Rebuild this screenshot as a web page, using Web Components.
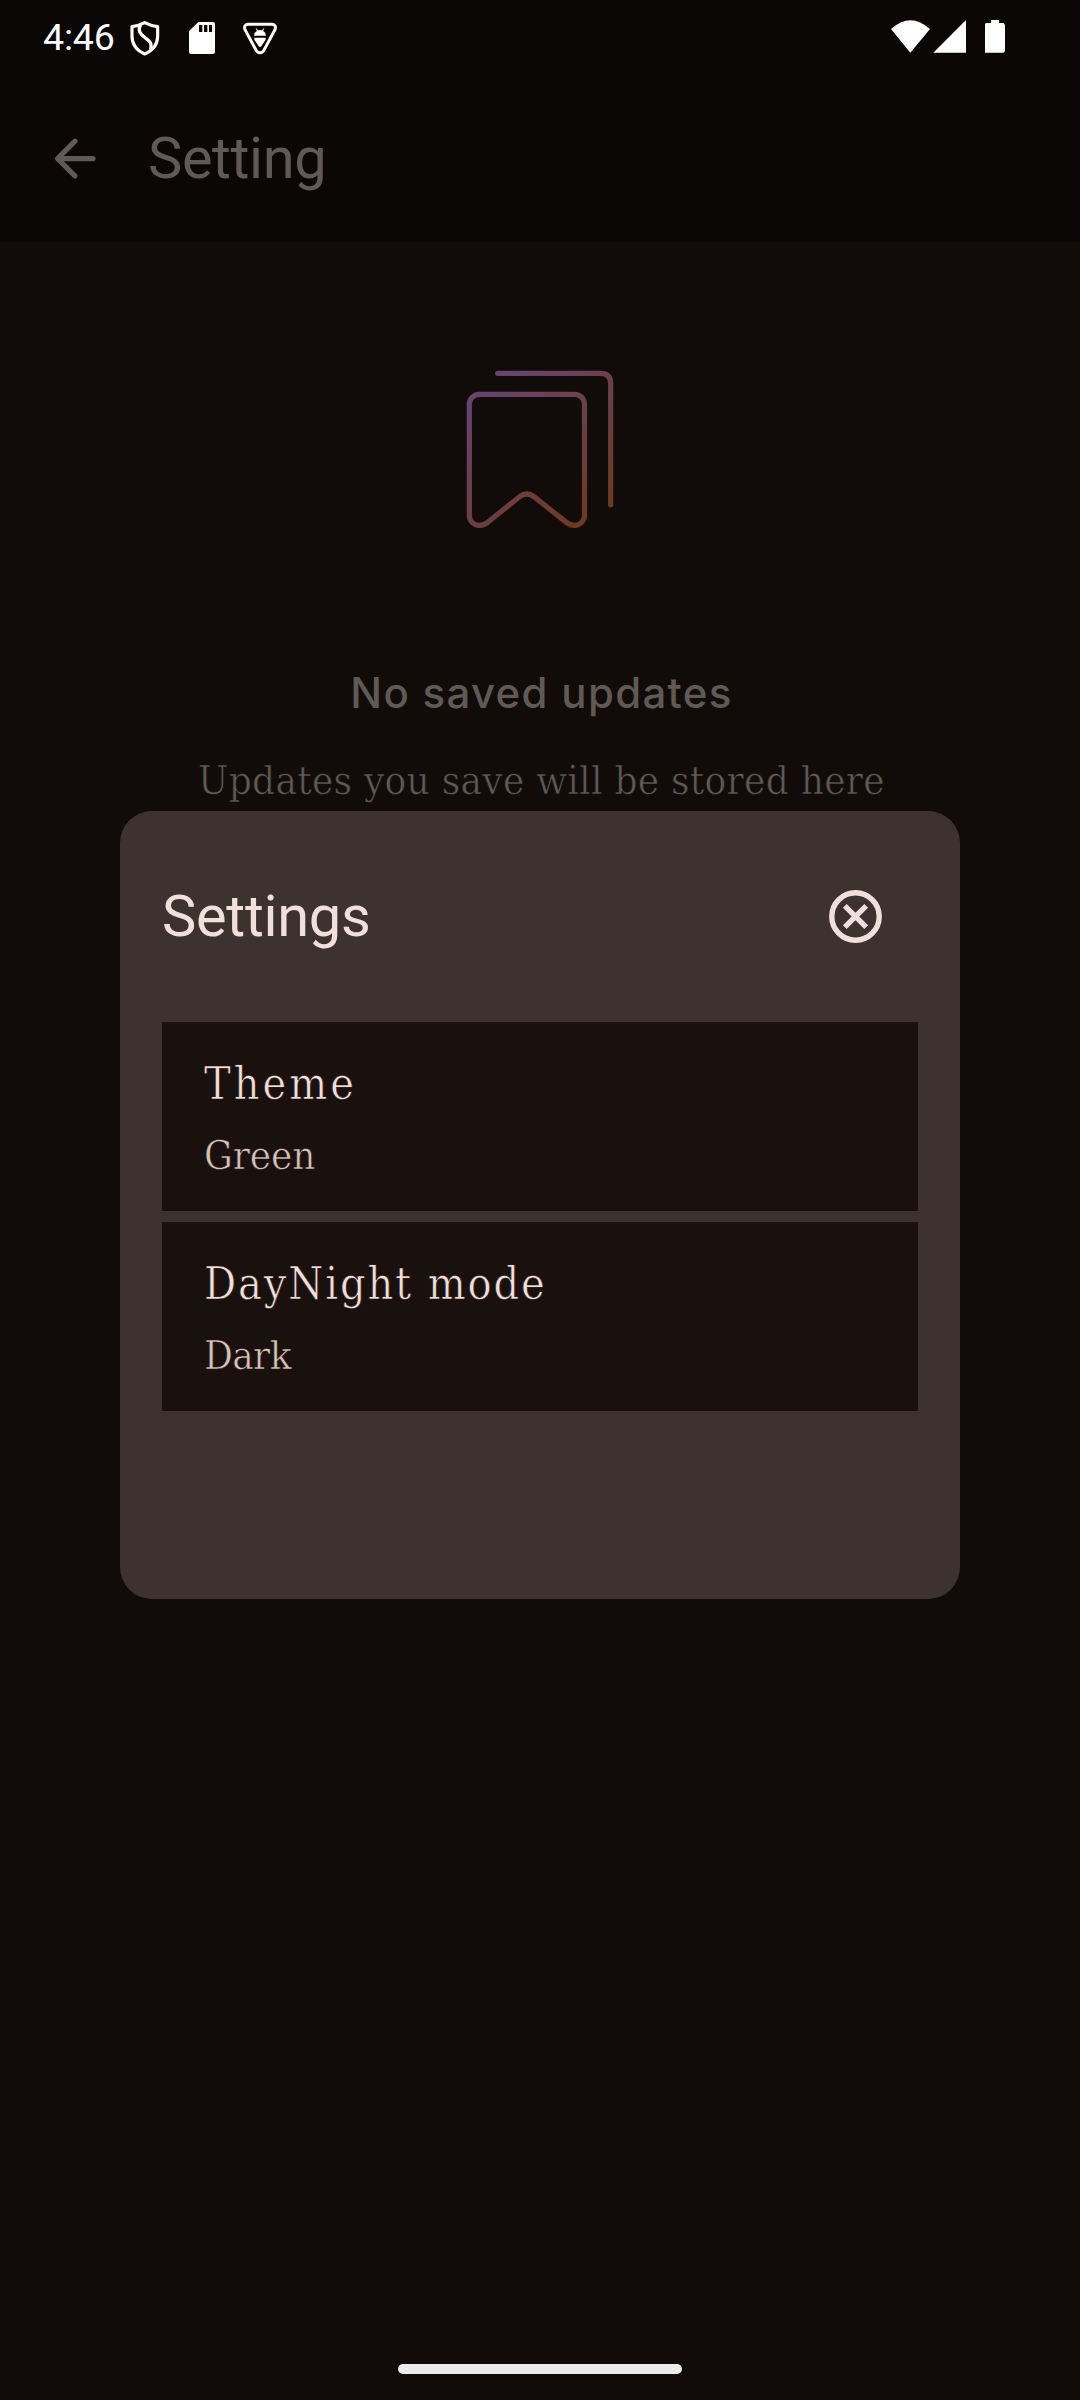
<!DOCTYPE html>
<html lang="en">
<head>
<meta charset="utf-8">
<title>Setting</title>
<style>
html,body{margin:0;padding:0;background:#110c09}
body{width:1080px;height:2400px;overflow:hidden;font-family:Roboto,sans-serif}
</style>
</head>
<body>
<app-screen>
  <status-bar slot="status" time="4:46"></status-bar>
  <top-bar slot="bar">Setting</top-bar>
  <empty-state>
    <span slot="title">No saved updates</span>
    <span slot="text">Updates you save will be stored here</span>
  </empty-state>
  <settings-dialog slot="dialog" heading="Settings">
    <setting-row><span slot="name" style="letter-spacing:3px">Theme</span><span slot="value" style="letter-spacing:-.1px">Green</span></setting-row>
    <setting-row><span slot="name" style="letter-spacing:1.9px">DayNight mode</span><span slot="value" style="letter-spacing:-.6px">Dark</span></setting-row>
  </settings-dialog>
</app-screen>
<script>
function define(name, html, setup) {
  customElements.define(name, class extends HTMLElement {
    constructor() {
      super();
      this.attachShadow({mode: 'open'}).innerHTML = html;
    }
    connectedCallback() { if (setup) setup(this, this.shadowRoot); }
  });
}

define('app-screen', `
<style>
:host{display:flex;flex-direction:column;position:relative;width:1080px;height:2400px;background:#110c09}
.head{background:#0a0706;height:242px;flex:none;display:flex;flex-direction:column}
main{flex:1}
.nav{display:flex;justify-content:center;padding-bottom:26px}
.pill{width:284px;height:10px;border-radius:5px;background:#ececec}
.layer{position:absolute;inset:0;display:flex;align-items:center;justify-content:center;padding-top:10px}
</style>
<div class="head"><slot name="status"></slot><slot name="bar"></slot></div>
<main><slot></slot></main>
<div class="nav"><div class="pill"></div></div>
<div class="layer"><slot name="dialog"></slot></div>`);

define('status-bar', `
<style>
:host{display:flex;height:74px;box-sizing:border-box;padding:20px 75px 0 43px;align-items:flex-start;justify-content:space-between;color:#fff}
div{display:flex}
.time{font-size:37.500px;line-height:34px;width:87px;letter-spacing:-.2px}
svg{display:block;flex:none}
</style>
<div>
  <span class="time"></span>
  <svg width="30" height="36" viewBox="389 60 90 108" fill="none" stroke="#fff" stroke-width="9.5" stroke-linejoin="round">
    <path d="M433 68 Q452 78 472 80 V108 Q472 145 433 162 Q395 145 395 108 V80 Q414 78 433 68Z"/>
    <path d="M421 75 Q411 90 424 104 L446 123 Q456 132 450 149" stroke-width="10"/>
  </svg>
  <svg width="26" height="36" viewBox="567 60 78 108" style="margin-left:29px">
    <path fill="#fff" fill-rule="evenodd" d="M595 66H639Q645 66 645 72V156Q645 162 639 162H573Q567 162 567 156V93ZM597 75V96H607V75ZM612 75V96H622V75ZM627 75V96H636V75Z"/>
  </svg>
  <svg width="36" height="36" viewBox="726 60 108 108" style="margin-left:27px">
    <path d="M744 73H816Q830 75 825 89L791 152Q780 165 769 152L735 89Q730 75 744 73Z" fill="none" stroke="#fff" stroke-width="9"/>
    <path d="M762 107Q763 96 771 92L767 86L769 85L774 91Q780 89 786 91L791 85L793 86L789 92Q797 96 798 107ZM763 113H797V119L784 139Q780 143 776 139L763 119Z" fill="#fff"/>
  </svg>
</div>
<div>
  <svg width="114" height="34" viewBox="93 60 342 102" fill="#fff">
    <path d="M93 87Q151 34 210 87L151 158Z"/>
    <path d="M220 158L318 60V158Z"/>
    <path d="M393 60H417V69H430L435 74V154L431 158H375V72L378 69H393Z"/>
  </svg>
</div>`, (el, root) => { root.querySelector('.time').textContent = el.getAttribute('time'); });

define('top-bar', `
<style>
:host{display:flex;align-items:center;flex:1;padding-left:52px;color:#615957}
svg{display:block;flex:none;margin:1px 50px 0 0}
.t{font-size:57.75px;line-height:68px;letter-spacing:-.4px}
</style>
<svg width="46" height="44" viewBox="52 137 46 44" fill="none" stroke="#615957" stroke-width="5.2" stroke-linecap="round" stroke-linejoin="round"><path d="M93 158.6H58M75 141.2L57.6 158.6L75 176"/></svg>
<div class="t"><slot></slot></div>`);

define('empty-state', `
<style>
:host{display:flex;flex-direction:column;align-items:center;padding-top:108px;color:#605955}
svg{display:block}
.h{margin-top:115px;padding-left:3px;font:500 42px/56px Inter,sans-serif;letter-spacing:1.3px;white-space:nowrap}
.p{margin-top:31px;padding-left:3px;font:40px/56px "DejaVu Serif Condensed","DejaVu Serif",serif;font-stretch:condensed;letter-spacing:.3px;white-space:nowrap;-webkit-text-stroke:.6px #110c09}
</style>
<svg width="200" height="200" viewBox="0 0 600 600" fill="none" stroke-width="15.5" stroke-linecap="round">
  <defs>
    <linearGradient id="a" gradientUnits="userSpaceOnUse" x1="110" y1="130" x2="430" y2="510"><stop offset="0" stop-color="#68436e"/><stop offset=".5" stop-color="#6a4048"/><stop offset="1" stop-color="#6c3922"/></linearGradient>
    <linearGradient id="b" gradientUnits="userSpaceOnUse" x1="195" y1="70" x2="530" y2="445"><stop offset="0" stop-color="#68436e"/><stop offset=".5" stop-color="#6a4048"/><stop offset="1" stop-color="#6c3922"/></linearGradient>
  </defs>
  <path stroke="url(#b)" d="M173 70H482Q512 70 512 101V464"/>
  <path stroke="url(#a)" d="M118 133H404A29.500 29.500 0 0 1 433.500 162V496A29.500 29.500 0 0 1 404 526Q391 526 379 517L282 440Q260 424 239 440L143 517Q131 526 118 526A29.500 29.500 0 0 1 88 496V162A29.500 29.500 0 0 1 118 133Z"/>
</svg>
<div class="h"><slot name="title"></slot></div>
<div class="p"><slot name="text"></slot></div>`);

define('settings-dialog', `
<style>
:host{display:flex;flex-direction:column;box-sizing:border-box;width:840px;height:788px;padding:0 42px;border-radius:32px;background:#3d3230;color:#f1dfda}
header{display:flex;align-items:center;justify-content:space-between;height:211px;flex:none;padding-right:31px}
.t{font-size:57.75px;line-height:68px;letter-spacing:-.3px;margin-bottom:2px}
svg{display:block}
.rows{display:flex;flex-direction:column;gap:11px}
</style>
<header><div class="t"></div>
<svg width="63" height="63" viewBox="-31.500 -31.500 63 63" fill="none" stroke="#f1dfda" stroke-width="5.4"><circle r="23.700"/><path d="M-10.700 -10.700L10.700 10.700M10.700 -10.700L-10.700 10.700"/></svg></header>
<div class="rows"><slot></slot></div>`, (el, root) => { root.querySelector('.t').textContent = el.getAttribute('heading'); });

define('setting-row', `
<style>
:host{display:flex;flex-direction:column;box-sizing:border-box;height:189px;padding:33px 42px 0 42px;background:#1a110f;color:#f1dfda;font-family:"DejaVu Serif Condensed","DejaVu Serif",serif;font-stretch:condensed;white-space:nowrap;-webkit-text-stroke:.6px #1a110f}
.n{font-size:44.5px;line-height:58px}
.v{font-size:40px;line-height:52px;margin-top:16px;color:#d8c2bc}
</style>
<div class="n"><slot name="name"></slot></div>
<div class="v"><slot name="value"></slot></div>`);
</script>
</body>
</html>
